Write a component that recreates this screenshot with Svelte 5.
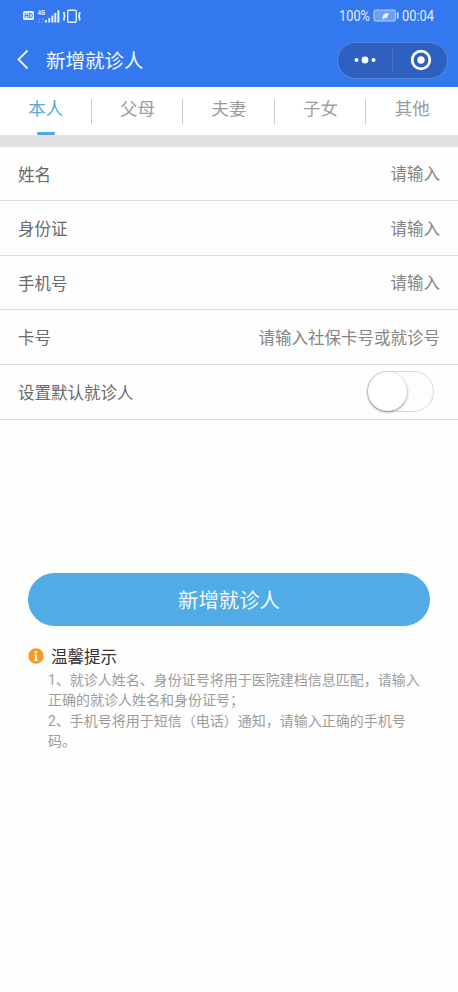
<script>
  const tabs = ['本人', '父母', '夫妻', '子女', '其他'];
  let current = $state(0);

  const fields = $state([
    { label: '姓名', hint: '请输入', value: '' },
    { label: '身份证', hint: '请输入', value: '' },
    { label: '手机号', hint: '请输入', value: '' },
    { label: '卡号', hint: '请输入社保卡号或就诊号', value: '' },
  ]);
  let isDefault = $state(false);
</script>

<div class="page">
  <header>
    <div class="status">
      <svg width="60" height="18" viewBox="0 0 60 18" fill="#e3f1ff">
        <rect x="1" y="4" width="11" height="9" rx="1.5" />
        <text x="2.2" y="10.9" font-size="6.4" font-weight="700" fill="#3478f0" textLength="8.6" lengthAdjust="spacingAndGlyphs">HD</text>
        <text x="15.5" y="8" font-size="7" font-weight="700" textLength="7.5" lengthAdjust="spacingAndGlyphs">4G</text>
        <path d="M17.5 11v5m-1.5-2 1.5 2m3-5v5m0-5 1.5 2" stroke="#6ea3f7" stroke-width=".7" fill="none" />
        <path d="M23 13h2v2.4h-2zM26.2 11h2v4.4h-2zM29.3 8.5h2v6.9h-2zM32.3 6h2v9.4h-2zM35.4 3.3h2v12.1h-2z" />
        <rect x="45.7" y="3.2" width="8.6" height="12" rx="1" fill="none" stroke="#e3f1ff" stroke-width="1.4" />
        <path d="M42 5v2l.8 2-.8 2v2.5M57.6 5v2l-.8 2 .8 2v2.5" fill="none" stroke="#e3f1ff" stroke-width="1.7" />
      </svg>
      <svg width="110" height="24" viewBox="0 0 110 24" fill="#e3f1ff">
        <text x="1" y="17" font-size="14.5" textLength="31" lengthAdjust="spacingAndGlyphs">100%</text>
        <rect x="36" y="6" width="21.5" height="11" rx="1.5" fill="#6d9ff2" stroke="#b5d2fb" />
        <path d="M59 8.5h1.5v6H59z" />
        <path d="M44.5 15c-.7-4 2-6 6-6-.3 4-2 6-4.5 5.2l-1 1.5z" />
        <text x="64" y="17" font-size="14.5" textLength="32" lengthAdjust="spacingAndGlyphs">00:04</text>
      </svg>
    </div>
    <div class="nav">
      <svg class="back" width="14" height="22" viewBox="0 0 14 22" fill="none" stroke="#e8f5ff" stroke-width="1.8">
        <path d="M11.5 1.5 2.5 10.5l9 9" />
      </svg>
      <h1>新增就诊人</h1>
      <div class="capsule">
        <svg width="26" height="10" viewBox="0 0 26 10" fill="#fff">
          <circle cx="4.5" cy="5" r="2" /><circle cx="13" cy="5" r="3.4" /><circle cx="21.5" cy="5" r="2" />
        </svg>
        <i></i>
        <svg width="22" height="22" viewBox="0 0 22 22" fill="#fff">
          <circle cx="11" cy="11" r="8.8" fill="none" stroke="#fff" stroke-width="2.7" /><circle cx="11" cy="11" r="3.7" />
        </svg>
      </div>
    </div>
  </header>

  <nav class="tabs">
    {#each tabs as tab, i}
      <button class="tab" class:active={i === current} onclick={() => (current = i)}>{tab}</button>
    {/each}
  </nav>

  <form class="form">
    {#each fields as field}
      <label class="row">
        <span>{field.label}</span>
        <input placeholder={field.hint} bind:value={field.value} />
      </label>
    {/each}
    <div class="row">
      <span>设置默认就诊人</span>
      <button type="button" class="switch" class:on={isDefault} role="switch" aria-checked={isDefault}
        aria-label="设置默认就诊人" onclick={() => (isDefault = !isDefault)}><b></b></button>
    </div>
  </form>

  <button class="submit">新增就诊人</button>

  <section class="tips">
    <h2>
      <svg width="16" height="16" viewBox="0 0 16 16">
        <circle cx="8" cy="8" r="7.7" fill="#f99b23" />
        <circle cx="8" cy="4.3" r="1.3" fill="#fff" />
        <path d="M6.5 6.6H9v5h.5V13h-3v-1.4H7V8h-.5z" fill="#fff" />
      </svg>
      <span>温馨提示</span>
    </h2>
    <p>1、就诊人姓名、身份证号将用于医院建档信息匹配，请输入正确的就诊人姓名和身份证号；</p>
    <p>2、手机号将用于短信（电话）通知，请输入正确的手机号码。</p>
  </section>
</div>

<style>
  :global(body) {
    margin: 0;
    background: #fdfefd;
  }

  .page {
    min-height: 992px;
    font-family: Roboto, 'Noto Sans CJK SC', sans-serif;
    color: #6a6a6a;
    background: #fefefe;
  }

  button, input {
    font: inherit;
    border: 0;
    padding: 0;
    background: none;
    outline: none;
  }

  h1, h2, p { margin: 0; font-weight: 400; }

  header {
    height: 87px;
    background: #3478f0;
  }

  .status {
    height: 32px;
    padding: 0 10px 0 22px;
    display: flex;
    align-items: center;
    justify-content: space-between;
    box-sizing: border-box;
  }

  .nav {
    height: 55px;
    padding: 0 10px 0 16px;
    display: flex;
    align-items: center;
  }

  h1 {
    flex: 1;
    margin: 4px 0 0 16px;
    font-size: 19.5px;
    line-height: 28px;
    color: #eff8ff;
  }

  .capsule {
    width: 111px;
    height: 37px;
    margin-top: 1px;
    padding: 0 15px 0 14px;
    box-sizing: border-box;
    border: 1px solid #5488e2;
    border-radius: 19px;
    background: #2e60c0;
    display: flex;
    align-items: center;
  }
  .capsule i {
    width: 1px;
    height: 23px;
    margin: 0 auto 0 14px;
    background: #466fc1;
  }

  .tabs {
    height: 48px;
    display: flex;
    border-bottom: 12px solid #e2e2e2;
    background: #fff;
  }

  .tab {
    flex: 1;
    position: relative;
    padding-bottom: 7px;
    font-size: 17.5px;
    color: #9c9c9c;
    cursor: pointer;
  }
  .tab + .tab::before {
    content: '';
    position: absolute;
    left: -1px;
    top: 12px;
    width: 1px;
    height: 25px;
    background: #ccc;
  }
  .tab.active { color: #51a9dc; }
  .tab.active::after {
    content: '';
    position: absolute;
    left: 50%;
    bottom: 0;
    width: 18px;
    height: 3px;
    margin-left: -9px;
    border-radius: 1px;
    background: #51a9dc;
  }

  .row {
    height: 54.6px;
    padding: 0 18px;
    box-sizing: border-box;
    border-bottom: 1px solid #dedede;
    display: flex;
    align-items: center;
    justify-content: space-between;
    font-size: 16.5px;
  }
  .row:first-child { height: 54.3px; }
  .row input {
    flex: 1;
    min-width: 0;
    padding-top: 2px;
    text-align: right;
    color: #666;
  }
  .row input::placeholder { color: #858585; opacity: 1; }

  .switch {
    width: 67px;
    height: 41px;
    margin-right: 6px;
    box-sizing: border-box;
    border: 1px solid #d9d9d9;
    border-radius: 21px;
    background: #fdfdfd;
    display: flex;
  }
  .switch b {
    width: 39px;
    height: 39px;
    border-radius: 50%;
    background: #fff;
    box-shadow: 0 1px 3px rgba(0, 0, 0, 0.45);
    transition: transform 0.2s;
  }
  .switch.on { background: #50abe7; }
  .switch.on b { transform: translateX(26px); }

  .submit {
    display: block;
    width: 402px;
    height: 53.5px;
    margin: 153px auto 0;
    padding-bottom: 1px;
    border-radius: 27px;
    font-size: 20.4px;
    color: #f3faff;
    background: #50abe7;
    cursor: pointer;
  }

  .tips {
    padding: 16.8px 28px 0;
    font-size: 14px;
    line-height: 20.4px;
    color: #9c9c9c;
  }
  .tips h2 {
    display: flex;
    align-items: center;
    gap: 7px;
    font-size: 16.5px;
    line-height: 26px;
    color: #333;
  }
  .tips h2 span { padding-top: 2px; margin-bottom: -1px; }
  .tips p { margin: 0 0 0 20px; width: 374px; }
</style>
